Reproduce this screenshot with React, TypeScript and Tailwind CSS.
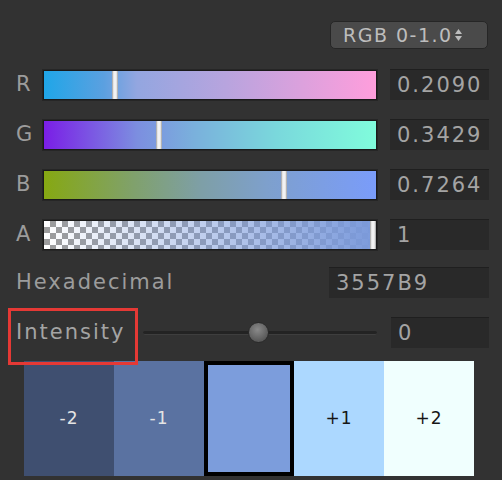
import React from 'react';

const channels = [
    { label: 'R', value: 0.209, text: '0.2090', bg: 'bg-[linear-gradient(to_right,#1fa6e8,#5ba0e0_18%,#93a6e0_28%,#b8a4de_55%,#ff9edc)]' },
    { label: 'G', value: 0.3429, text: '0.3429', bg: 'bg-[linear-gradient(to_right,#7a1ee6,#7c8ee0_28%,#7ab0dc_45%,#7ad8dc_70%,#80fcdc)]' },
    { label: 'B', value: 0.7264, text: '0.7264', bg: 'bg-[linear-gradient(to_right,#86a812,#80a16c_27%,#7e9fa6_47%,#7ea0cc_67%,#7a9cfa)]' },
];

const swatches = [
    { text: '-2', cls: 'bg-[#3f4f70] text-[#e4e4e4]' },
    { text: '-1', cls: 'bg-[#5a72a1] text-[#e4e4e4]' },
    { text: '', cls: 'bg-[#7c9ddc] border-[4px] border-black' },
    { text: '+1', cls: 'bg-[#acd8ff] text-[#161616]' },
    { text: '+2', cls: 'bg-[#f0fffe] text-[#161616]' },
];

const ValueBox: React.FC<{ text: string; className?: string }> = ({ text, className = '' }) => (
    <div className={`h-[31px] bg-[#292929] border-t border-[#1f1f1f] flex items-center pl-[7px] text-[#a4a4a4] ${className}`}>
        {text}
    </div>
);

const Thumb: React.FC<{ value: number }> = ({ value }) => (
    <div
        className="absolute top-0 bottom-0 w-[6px] bg-[linear-gradient(to_right,#9a9a9a,#f2f2f2_30%,#f2f2f2_70%,#9a9a9a)]"
        style={{ left: `${value * 326}px` }}
    />
);

const ChannelRow: React.FC<{ label: string; value: number; text: string; bg: React.ReactNode; className?: string }> = ({ label, value, text, bg, className = '' }) => (
    <div className={`flex items-center ${className}`}>
        <span className="w-[27px] text-[#9c9c9c]">{label}</span>
        <div className="w-[334px] h-[30px] border border-[#1a1a1a] shadow-[0_0_0_1px_#262626]">
            <div className="relative w-full h-full">
                {bg}
                <Thumb value={value} />
            </div>
        </div>
        <ValueBox text={text} className="ml-[13px] w-[99px]" />
    </div>
);

export default function App() {
    return (
        <div className="w-[502px] h-[480px] bg-[#323232] overflow-hidden font-['DejaVu_Sans',sans-serif] text-[21px] tracking-[2px] leading-none">
            <div className="flex flex-col pl-[16px] pr-[13px] pt-[21px]">
                <div className="flex justify-end pr-[1px]">
                    <div className="w-[158px] h-[28px] rounded-[5px] bg-[#4a4a4a] border border-[#262626] flex items-center pl-[12px] text-[19px] tracking-[1.5px] text-[#bdbdbd]">
                        <span>RGB 0-1.0</span>
                        <svg width="9" height="16" viewBox="0 0 9 16" className="ml-[1px]">
                            <path d="M4.5 2 L8 7 H1 Z" fill="#bdbdbd" />
                            <path d="M4.5 14 L8 9 H1 Z" fill="#bdbdbd" />
                        </svg>
                    </div>
                </div>

                {channels.map((c, i) => (
                    <ChannelRow
                        key={c.label}
                        label={c.label}
                        value={c.value}
                        text={c.text}
                        className={i === 0 ? 'mt-[20px]' : 'mt-[19px]'}
                        bg={<div className={`absolute inset-0 ${c.bg}`} />}
                    />
                ))}

                <ChannelRow
                    label="A"
                    value={1}
                    text="1"
                    className="mt-[19px]"
                    bg={
                        <div className="absolute inset-0 bg-[repeating-conic-gradient(#9c9c9c_0%_25%,#ffffff_0%_50%)] bg-[length:12px_12px]">
                            <div className="absolute inset-0 bg-[linear-gradient(to_right,#7b9adb00,#7b9adb)]" />
                        </div>
                    }
                />

                <div className="flex items-center justify-between mt-[17px]">
                    <span className="text-[#9c9c9c]">Hexadecimal</span>
                    <ValueBox text="3557B9" className="w-[160px]" />
                </div>

                <div className="relative flex items-center mt-[19px]">
                    <div className="absolute -left-[8px] -top-[9px] w-[130px] h-[57px] border-[3px] border-[#e53935] z-10" />
                    <span className="w-[127px] text-[#a4a4a4]">Intensity</span>
                    <div className="relative w-[234px] h-[22px] flex items-center">
                        <div className="w-full h-[4px] rounded-full bg-[#232323] border-b border-[#3e3e3e]" />
                        <div className="absolute left-[105px] top-[0px] w-[21px] h-[21px] rounded-full bg-[radial-gradient(circle_at_45%_35%,#8a8a8a,#5a5a5a_70%)] border border-[#2a2a2a]" />
                    </div>
                    <ValueBox text="0" className="ml-[14px] w-[98px]" />
                </div>

                <div className="flex mt-[13px] ml-[8px] text-[17px] tracking-[1px]">
                    {swatches.map((s, i) => (
                        <div key={i} className={`w-[90px] h-[115px] flex items-center justify-center ${s.cls}`}>
                            {s.text}
                        </div>
                    ))}
                </div>
            </div>
        </div>
    );
}
